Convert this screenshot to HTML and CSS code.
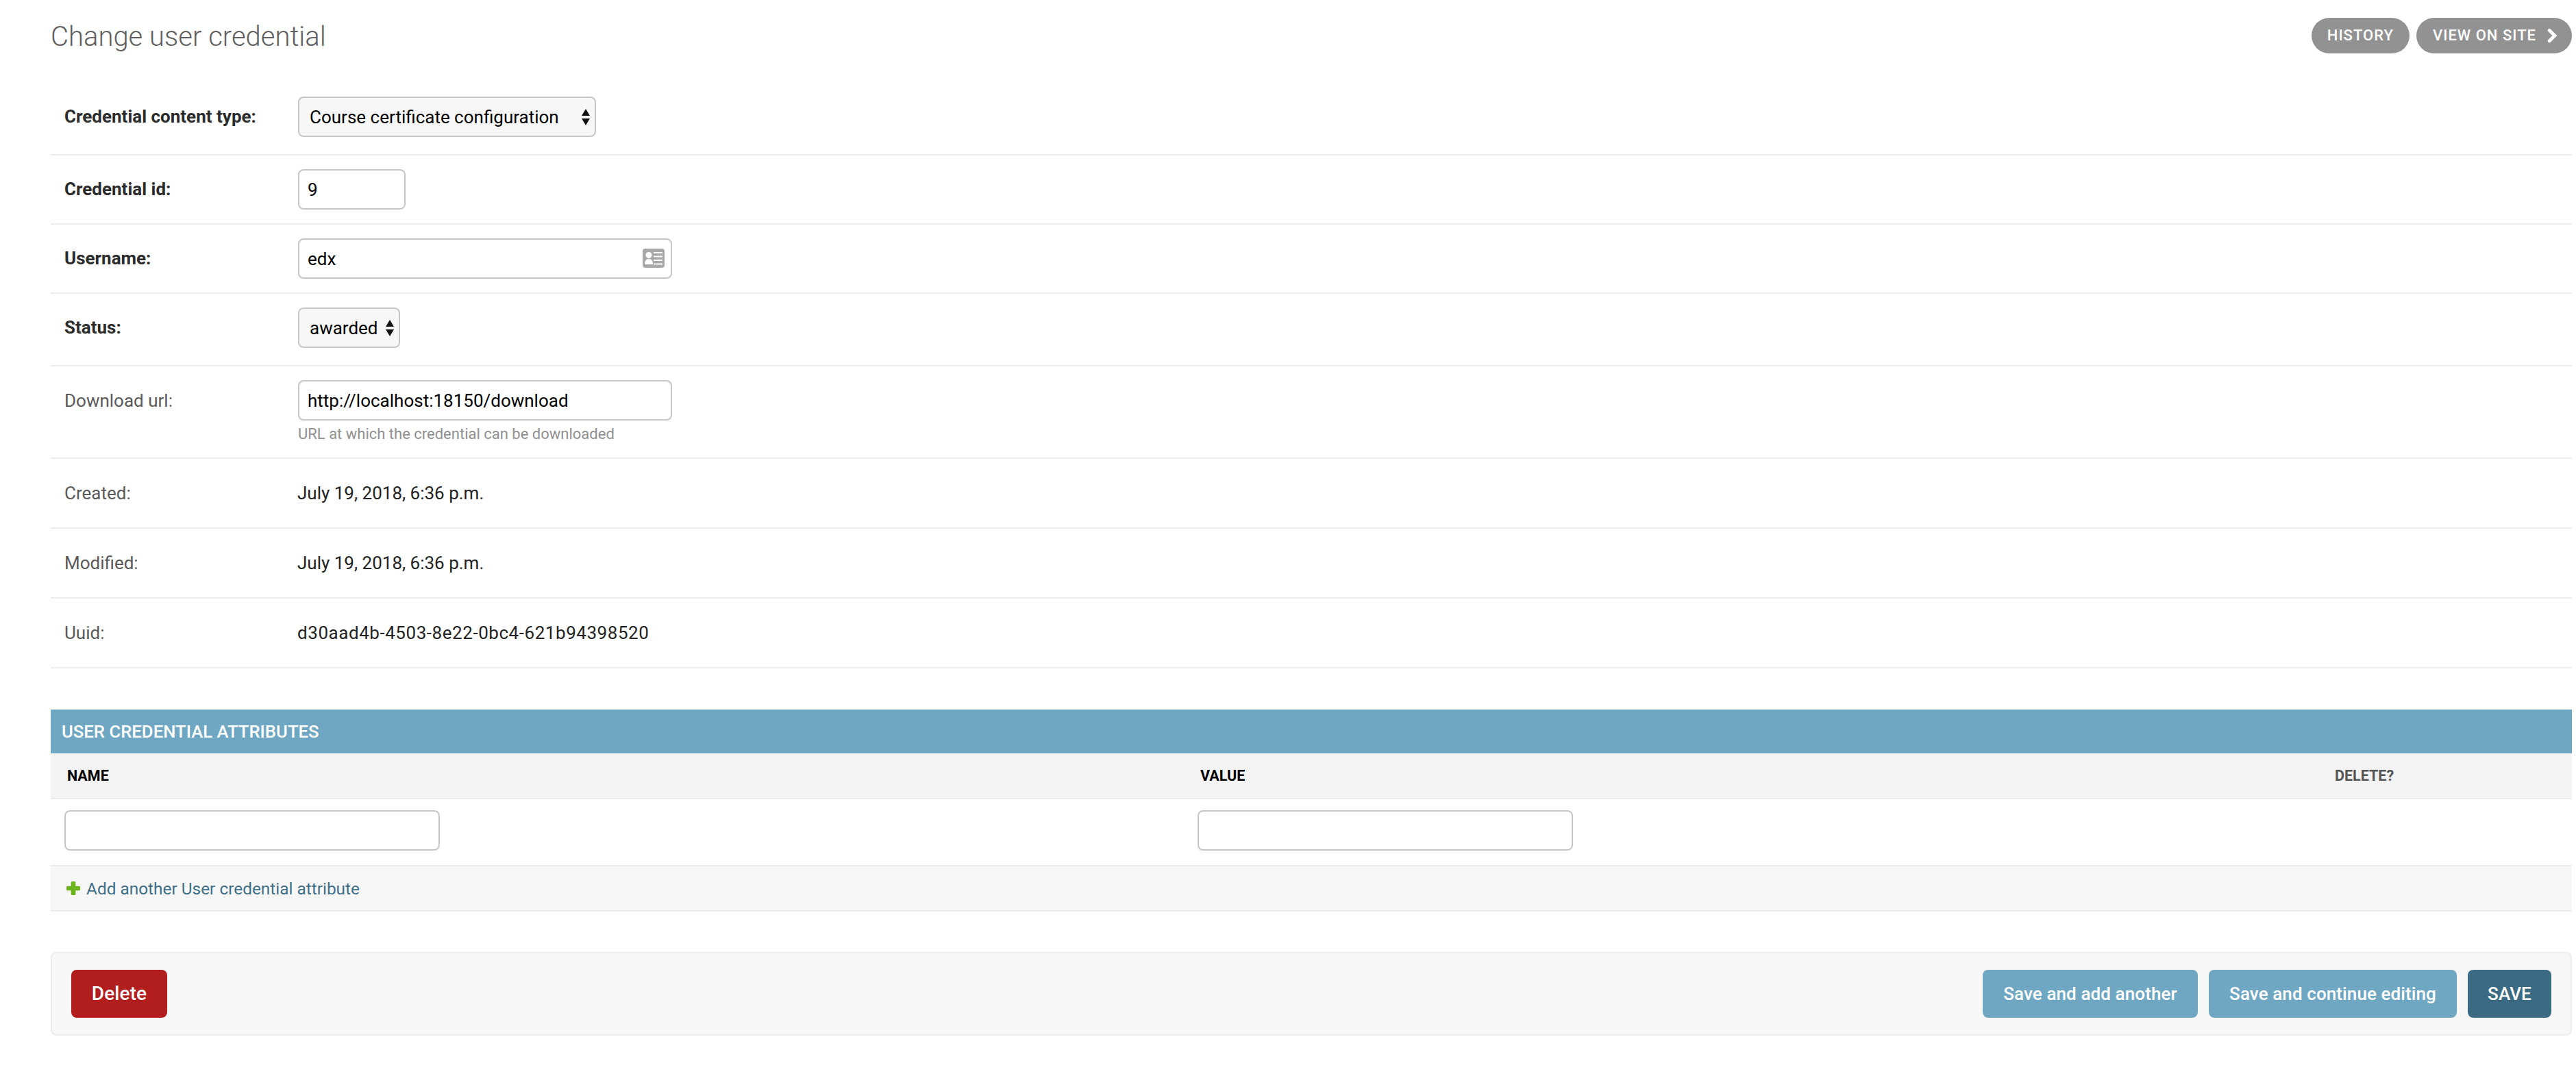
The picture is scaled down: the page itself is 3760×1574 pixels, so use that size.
FILE: index.html
```html
<!DOCTYPE html>
<html lang="en">
<head>
<meta charset="utf-8">
<title>Change user credential</title>
<link rel="stylesheet" href="styles.css">
</head>
<body>
<main class="content">
  <header class="page-head">
    <h1 class="title">Change user credential</h1>
    <ul class="tools">
      <li><a class="tool tool-history" href="#">History</a></li>
      <li><a class="tool" href="#">View on site
        <svg class="chevron" viewBox="0 0 16 22" aria-hidden="true"><path d="M3.200 3.200 11 11 3.200 18.800" fill="none" stroke="#fff" stroke-width="4.800" stroke-linecap="round"/></svg>
      </a></li>
    </ul>
  </header>

  <form class="form">
    <div class="row row-select">
      <label class="label strong">Credential content type:</label>
      <span class="select-wrap">
        <select class="select select-type"><option>Course certificate configuration</option></select>
        <svg class="updown" viewBox="0 0 12 24" aria-hidden="true"><path d="M6 0 12 10H0ZM6 24 0 14H12Z" fill="#111"/></svg>
      </span>
    </div>
    <div class="row">
      <label class="label strong">Credential id:</label>
      <input class="input input-id" type="text" value="9">
    </div>
    <div class="row">
      <label class="label strong">Username:</label>
      <span class="lookup">
        <input class="input input-wide" type="text" value="edx">
        <svg class="card" viewBox="0 0 32 28" aria-hidden="true">
          <rect width="32" height="28" rx="4" fill="#a8a8a8"/>
          <circle cx="9" cy="9.500" r="4.500" fill="#fff"/>
          <path d="M3 23C3 18 5 15 9 15S15 18 15 23Z" fill="#fff"/>
          <path d="M16 6H29M16 11.500H29M16 17H29M16 22.500H29" stroke="#fff" stroke-width="2"/>
        </svg>
      </span>
    </div>
    <div class="row row-select">
      <label class="label strong">Status:</label>
      <span class="select-wrap">
        <select class="select select-status"><option>awarded</option></select>
        <svg class="updown" viewBox="0 0 12 24" aria-hidden="true"><path d="M6 0 12 10H0ZM6 24 0 14H12Z" fill="#111"/></svg>
      </span>
    </div>
    <div class="row row-help">
      <label class="label">Download url:</label>
      <div class="field">
        <input class="input input-wide" type="text" value="http://localhost:18150/download">
        <p class="help">URL at which the credential can be downloaded</p>
      </div>
    </div>
    <div class="row row-read"><span class="label">Created:</span><span class="value">July 19, 2018, 6:36 p.m.</span></div>
    <div class="row row-read"><span class="label">Modified:</span><span class="value">July 19, 2018, 6:36 p.m.</span></div>
    <div class="row row-read"><span class="label">Uuid:</span><span class="value value-uuid">d30aad4b-4503-8e22-0bc4-621b94398520</span></div>

    <section class="inline">
      <h2 class="inline-title">User credential attributes</h2>
      <table class="table">
        <thead>
          <tr>
            <th class="col-name">Name</th>
            <th class="col-value">Value</th>
            <th class="col-delete">Delete?</th>
          </tr>
        </thead>
        <tbody>
          <tr>
            <td><input class="input input-cell" type="text"></td>
            <td><input class="input input-cell" type="text"></td>
            <td></td>
          </tr>
        </tbody>
      </table>
      <div class="add-row">
        <svg class="plus" viewBox="0 0 20 20" aria-hidden="true"><g fill="#6cb31d"><rect x="6.700" width="6.600" height="20" rx="1.500"/><rect y="6.700" width="20" height="6.600" rx="1.500"/></g></svg>
        <a class="add-link" href="#">Add another User credential attribute</a>
      </div>
    </section>

    <div class="submit-row">
      <a class="btn btn-delete" href="#">Delete</a>
      <div class="submit-right">
        <a class="btn btn-light btn-add" href="#">Save and add another</a>
        <a class="btn btn-light btn-continue" href="#">Save and continue editing</a>
        <a class="btn btn-save" href="#">SAVE</a>
      </div>
    </div>
  </form>
</main>
</body>
</html>
```

FILE: styles.css
```css
* { box-sizing: border-box; }
html, body { margin: 0; padding: 0; background: #fff; }
body {
  font-family: Roboto, "Liberation Sans", sans-serif;
  font-size: 26px;
  color: #333;
}
.content { padding: 0 6px 0 74px; }

.page-head {
  display: flex;
  justify-content: space-between;
  align-items: flex-start;
  height: 121px;
}
.title {
  margin: 30px 0 0;
  font-size: 40px;
  line-height: 48px;
  font-weight: 300;
  color: #5f5f5f;
}
.tools {
  list-style: none;
  display: flex;
  gap: 10px;
  margin: 26px 0 0;
  padding: 0;
}
.tool {
  display: flex;
  align-items: center;
  height: 52px;
  padding: 0 24px;
  border-radius: 26px;
  background: #929292;
  color: #fff;
  font-size: 22px;
  font-weight: 500;
  letter-spacing: 1px;
  line-height: 52px;
  text-transform: uppercase;
  text-decoration: none;
}
.tool-history { padding: 0 23px; }
.chevron { width: 16px; height: 22px; margin-left: 16px; margin-right: -4px; }

.row {
  display: flex;
  align-items: flex-start;
  padding: 20px 0;
  border-bottom: 2px solid #ececec;
}
.row-select { padding-bottom: 25px; }
.row-help { padding-bottom: 22px; }
.row-read { height: 102px; align-items: center; padding: 0; }
.label {
  flex: none;
  width: 361px;
  padding-left: 20px;
  line-height: 59px;
  color: #5a5a5a;
}
.row-help .label { line-height: 61px; }
.row-read .label { line-height: 30px; }
.strong { font-weight: 700; color: #2b2b2b; }
.value { margin-left: -1px; color: #222; line-height: 30px; }
.value-uuid { letter-spacing: 0.55px; }

.input {
  display: block;
  height: 59px;
  padding: 0 12px;
  border: 2px solid #c6c6c6;
  border-radius: 8px;
  background: #fff;
  color: #000;
  font: inherit;
  outline: none;
}
.input-id { width: 157px; }
.input-wide { width: 546px; }
.input-cell { width: 548px; }
.lookup { position: relative; display: block; }
.card { position: absolute; top: 15px; right: 11px; width: 32px; height: 28px; }

.select-wrap { position: relative; display: block; }
.select {
  display: block;
  height: 59px;
  padding: 0 0 0 15px;
  border: 2px solid #c6c6c6;
  border-radius: 8px;
  background: #f7f7f7;
  color: #000;
  font: inherit;
  outline: none;
  appearance: none;
}
.select-type { width: 435px; }
.select-status { width: 149px; }
.updown { position: absolute; top: 18px; right: 9px; width: 12px; height: 24px; }

.field { display: block; }
.help {
  margin: 8px 0 0;
  font-size: 22px;
  line-height: 24px;
  color: #8f8f8f;
}

.inline { margin-top: 60px; }
.inline-title {
  margin: 0;
  height: 64px;
  padding: 0 16px;
  background: #6fa7c3;
  color: #fff;
  font-size: 25.7px;
  font-weight: 500;
  line-height: 64px;
  text-transform: uppercase;
}
.table { width: 100%; border-collapse: collapse; table-layout: fixed; }
.table th {
  height: 66px;
  padding: 0 0 0 24px;
  background: #f3f3f3;
  border-bottom: 2px solid #ececec;
  color: #000;
  font-size: 21.5px;
  font-weight: 700;
  line-height: 24px;
  text-align: left;
  text-transform: uppercase;
}
.table th.col-delete { color: #555; }
.col-name { width: 1654px; }
.col-value { width: 1656px; }
.table td {
  height: 98px;
  padding: 16px 20px 21px;
  border-bottom: 2px solid #ececec;
  vertical-align: top;
}
.add-row {
  display: flex;
  align-items: center;
  gap: 9px;
  height: 66px;
  padding-left: 23px;
  background: #f7f7f7;
  border-bottom: 2px solid #ececec;
}
.plus { width: 20px; height: 20px; }
.add-link { color: #3f7088; font-size: 24.4px; text-decoration: none; }

.submit-row {
  display: flex;
  justify-content: space-between;
  margin-top: 59px;
  height: 122px;
  padding: 24px 28px;
  background: #f7f7f7;
  border: 2px solid #ececec;
  border-radius: 8px;
}
.submit-right { display: flex; gap: 16px; }
.btn {
  display: block;
  height: 70px;
  border-radius: 8px;
  color: #fff;
  font-size: 26px;
  font-weight: 500;
  letter-spacing: 0.1px;
  line-height: 70px;
  text-align: center;
  text-decoration: none;
}
.btn-delete { width: 140px; background: #b21e1e; font-size: 28px; }
.btn-light { background: #6fa7c3; }
.btn-add { width: 314px; }
.btn-continue { width: 362px; }
.btn-save { width: 122px; background: #3b6a83; }
```
